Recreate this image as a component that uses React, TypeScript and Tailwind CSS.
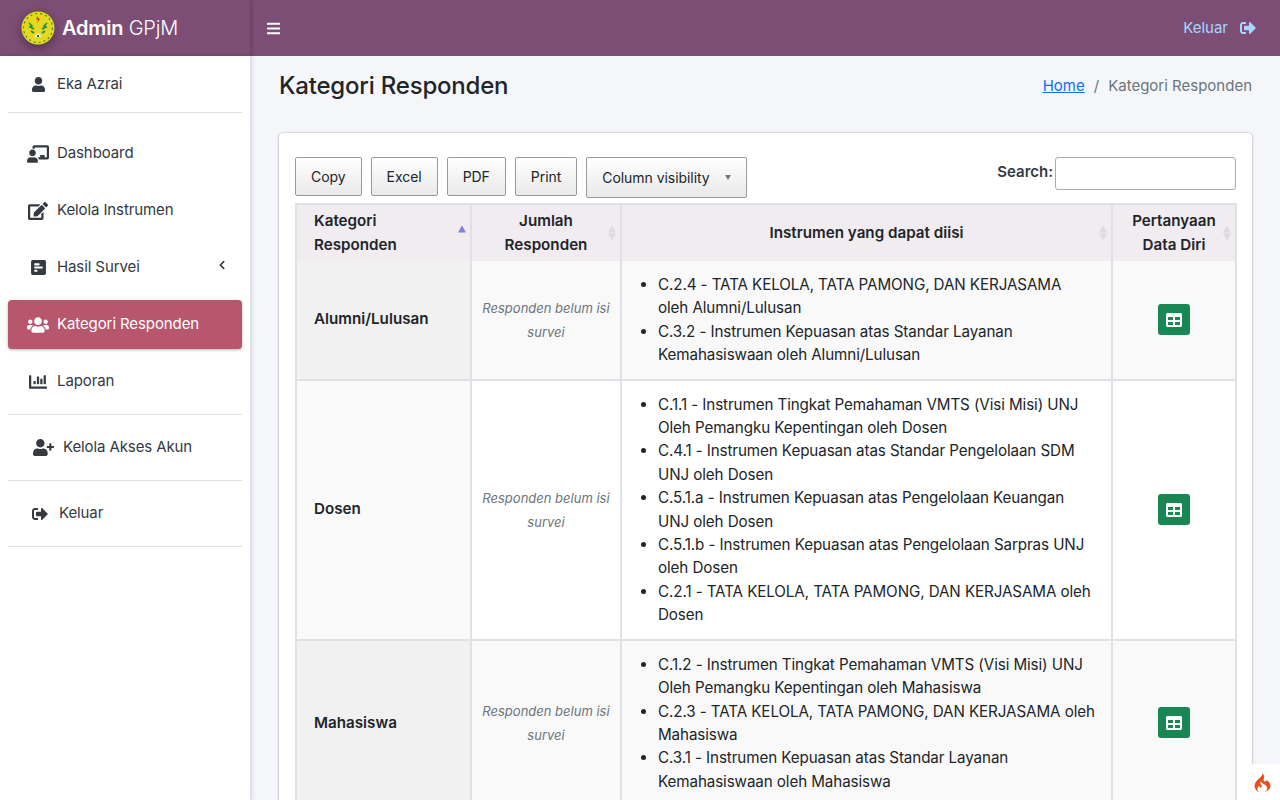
import {
  FaBars,
  FaChalkboardTeacher,
  FaChartBar,
  FaChevronLeft,
  FaEdit,
  FaPollH,
  FaSignOutAlt,
  FaTable,
  FaUser,
  FaUserPlus,
  FaUsers,
} from 'react-icons/fa';
import { SiCodeigniter } from 'react-icons/si';
import type { ReactNode } from 'react';

const font = "font-['Inter','Noto_Sans',sans-serif]";

function Logo() {
  return (
    <svg width="34" height="34" viewBox="0 0 34 34" className="shrink-0 rounded-full shadow-[0_3px_8px_rgba(0,0,0,0.35)]">
      <circle cx="17" cy="17" r="16.5" fill="#e3d81c" />
      <circle cx="17" cy="17" r="14.5" fill="none" stroke="#2f8f3f" strokeWidth="1.2" strokeDasharray="2 3" />
      <path d="M17 5l-2 3 2 1-1 3 3-4-2-1z" fill="#d2332b" />
      <path d="M8 12l3 3-2 1 4 2M26 12l-3 3 2 1-4 2M10 20l3 2M24 20l-3 2" fill="none" stroke="#1f8a4a" strokeWidth="1.6" />
      <path d="M13 26l4-4 4 4z" fill="#f3f3f3" />
      <path d="M16 24h2v2h-2z" fill="#1f6b3a" />
    </svg>
  );
}

function NavItem(props: { icon: ReactNode; label: string; active?: boolean; chevron?: boolean }) {
  const { icon, label, active, chevron } = props;
  return (
    <div
      className={
        active
          ? 'flex h-[49px] items-center rounded bg-[#b8566e] pl-[18px] text-white shadow-[0_1px_3px_rgba(0,0,0,0.3)]'
          : 'flex h-[49px] items-center rounded pl-[18px] text-[#343a40]'
      }
    >
      <span className="flex w-[24px] justify-center text-[#343a40]">{icon}</span>
      <span className="ml-[7px] text-[15px] tracking-[-0.1px]">{label}</span>
      {chevron ? <FaChevronLeft className="mb-[6px] ml-auto mr-[15px] text-[10px]" /> : null}
    </div>
  );
}

function Sidebar() {
  return (
    <aside className="flex w-[251px] shrink-0 flex-col border-r border-[#dee2e6] bg-white px-2 shadow-[1px_0_4px_rgba(0,0,0,0.12)]">
      <div className="flex h-[57px] items-center border-b border-[#dee2e6] pl-[23px] text-[#343a40]">
        <FaUser className="text-[15px]" />
        <span className="ml-[11px] text-[15px] tracking-[-0.1px]">Eka Azrai</span>
      </div>
      <nav className="mt-4 flex flex-col gap-2 border-b border-[#dee2e6] pb-2">
        <NavItem icon={<FaChalkboardTeacher className="text-[22px]" />} label="Dashboard" />
        <NavItem icon={<FaEdit className="text-[20px]" />} label="Kelola Instrumen" />
        <NavItem icon={<FaPollH className="text-[17px]" />} label="Hasil Survei" chevron />
        <NavItem
          icon={<FaUsers className="text-[22px] text-white" />}
          label="Kategori Responden"
          active
        />
        <NavItem icon={<FaChartBar className="text-[18px]" />} label="Laporan" />
      </nav>
      <div className="flex h-[66px] items-center border-b border-[#dee2e6] pl-[25px] text-[#343a40]">
        <FaUserPlus className="text-[21px]" />
        <span className="ml-[9px] text-[15px] tracking-[-0.1px]">Kelola Akses Akun</span>
      </div>
      <div className="flex h-[66px] items-center border-b border-[#dee2e6] pl-[24px] text-[#343a40]">
        <FaSignOutAlt className="text-[16px]" />
        <span className="ml-[11px] text-[15px] tracking-[-0.1px]">Keluar</span>
      </div>
    </aside>
  );
}

function ToolButton(props: { label: string; children?: ReactNode; tall?: boolean }) {
  return (
    <button
      className={
        (props.tall ? 'h-[41px] ' : 'h-[39px] ') +
        'flex items-center rounded-[2px] border border-[#999] bg-gradient-to-b from-white to-[#e9e9e9] px-[15px] text-[14px] tracking-[-0.05px] text-[#212529]'
      }
    >
      {props.label}
      {props.children}
    </button>
  );
}

function Sorter(props: { active?: boolean }) {
  return (
    <span className="absolute right-[4px] top-1/2 flex -translate-y-1/2 flex-col gap-[1px]">
      <span
        className={
          props.active
            ? 'h-0 w-0 border-x-[4px] border-b-[7px] border-x-transparent border-b-[#8080e0]'
            : 'h-0 w-0 border-x-[4px] border-b-[7px] border-x-transparent border-b-[#dcdcdc]'
        }
      />
      <span
        className={
          props.active
            ? 'h-0 w-0 border-x-[4px] border-t-[7px] border-x-transparent border-t-transparent'
            : 'h-0 w-0 border-x-[4px] border-t-[7px] border-x-transparent border-t-[#dcdcdc]'
        }
      />
    </span>
  );
}

const rows = [
  {
    name: 'Alumni/Lulusan',
    nameBg: 'bg-[#f1f1f1]',
    rowBg: 'bg-[#f9f9f9]',
    items: [
      'C.2.4 - TATA KELOLA, TATA PAMONG, DAN KERJASAMA oleh Alumni/Lulusan',
      'C.3.2 - Instrumen Kepuasan atas Standar Layanan Kemahasiswaan oleh Alumni/Lulusan',
    ],
  },
  {
    name: 'Dosen',
    nameBg: 'bg-[#fafafa]',
    rowBg: 'bg-white',
    items: [
      'C.1.1 - Instrumen Tingkat Pemahaman VMTS (Visi Misi) UNJ Oleh Pemangku Kepentingan oleh Dosen',
      'C.4.1 - Instrumen Kepuasan atas Standar Pengelolaan SDM UNJ oleh Dosen',
      'C.5.1.a - Instrumen Kepuasan atas Pengelolaan Keuangan UNJ oleh Dosen',
      'C.5.1.b - Instrumen Kepuasan atas Pengelolaan Sarpras UNJ oleh Dosen',
      'C.2.1 - TATA KELOLA, TATA PAMONG, DAN KERJASAMA oleh Dosen',
    ],
  },
  {
    name: 'Mahasiswa',
    nameBg: 'bg-[#f1f1f1]',
    rowBg: 'bg-[#f9f9f9]',
    items: [
      'C.1.2 - Instrumen Tingkat Pemahaman VMTS (Visi Misi) UNJ Oleh Pemangku Kepentingan oleh Mahasiswa',
      'C.2.3 - TATA KELOLA, TATA PAMONG, DAN KERJASAMA oleh Mahasiswa',
      'C.3.1 - Instrumen Kepuasan atas Standar Layanan Kemahasiswaan oleh Mahasiswa',
    ],
  },
];

function DataTable() {
  const th =
    'relative border-2 border-b-0 border-[#dee2e6] border-b-[#111] px-[17px] py-[4px] text-[15.2px] font-semibold leading-[24px] text-[#212529]';
  const td = 'border-2 border-t-0 border-[#dee2e6] align-middle';
  return (
    <table className="w-[940px] table-fixed border-collapse text-[#212529]">
      <thead>
        <tr className="bg-[#f0ecf0]">
          <th className={th + ' w-[175px] text-left'}>
            Kategori Responden
            <Sorter active />
          </th>
          <th className={th + ' w-[150px] text-center'}>
            Jumlah Responden
            <Sorter />
          </th>
          <th className={th + ' w-[491px] text-center'}>
            Instrumen yang dapat diisi
            <Sorter />
          </th>
          <th className={th + ' w-[124px] !px-[8px] text-center'}>
            Pertanyaan Data Diri
            <Sorter />
          </th>
        </tr>
      </thead>
      <tbody>
        {rows.map((row) => (
          <tr key={row.name} className={row.rowBg}>
            <td className={td + ' pl-[17px] text-[15.2px] font-semibold ' + row.nameBg}>{row.name}</td>
            <td className={td + ' px-[8px] text-center text-[13px] italic leading-[24px] text-[#6c757d]'}>
              Responden belum isi survei
            </td>
            <td className={td + ' py-[12px] pl-[36px] pr-[16px]'}>
              <ul className="list-disc text-[15.2px] leading-[23.4px] tracking-[-0.1px]">
                {row.items.map((item) => (
                  <li key={item}>{item}</li>
                ))}
              </ul>
            </td>
            <td className={td + ' text-center'}>
              <span className="inline-flex h-[31px] w-[32px] items-center justify-center rounded-[3px] bg-[#198754] align-middle text-white">
                <FaTable className="text-[16px]" />
              </span>
            </td>
          </tr>
        ))}
      </tbody>
    </table>
  );
}

export default function App() {
  return (
    <div className={font + ' relative flex h-[800px] w-[1280px] flex-col overflow-hidden bg-[#f4f6f9]'}>
      <header className="flex h-[56px] shrink-0 bg-[#7c4d75] text-white">
        <div className="flex w-[251px] shrink-0 items-center border-r border-[#6b4165] pl-[21px] shadow-[1px_0_3px_rgba(0,0,0,0.15)]">
          <Logo />
          <span className="ml-[7px] text-[20px] tracking-[-0.2px]">
            <b className="font-semibold">Admin</b> <span className="font-light">GPjM</span>
          </span>
        </div>
        <div className="flex flex-1 items-center justify-between pl-[15px] pr-[24px]">
          <FaBars className="text-[15px]" />
          <div className="flex items-center gap-[12px] text-[15px] text-[#a6d8ff]">
            <span>Keluar</span>
            <FaSignOutAlt className="text-[16px]" />
          </div>
        </div>
      </header>
      <div className="flex min-h-0 flex-1">
        <Sidebar />
        <main className="min-w-0 flex-1 px-[28px]">
          <div className="flex h-[60px] items-center justify-between">
            <h1 className="text-[24px] font-medium tracking-[-0.2px] text-[#212529]">Kategori Responden</h1>
            <div className="flex items-center text-[15px] text-[#6c757d]">
              <a className="text-[#0d6efd] underline">Home</a>
              <span className="mx-[9px]">/</span>
              <span>Kategori Responden</span>
            </div>
          </div>
          <section className="mt-[17px] w-[973px] rounded-[4px] bg-white px-[16px] pt-[24px] shadow-[0_0_2px_rgba(0,0,0,0.3),0_1px_3px_rgba(0,0,0,0.15)]">
            <div className="flex items-start justify-between">
              <div className="flex items-start gap-[9px]">
                <ToolButton label="Copy" />
                <ToolButton label="Excel" />
                <ToolButton label="PDF" />
                <ToolButton label="Print" />
                <ToolButton label="Column visibility" tall>
                  <span className="ml-[15px] mr-[0px] h-0 w-0 border-x-[3px] border-t-[5px] border-x-transparent border-t-[#777]" />
                </ToolButton>
              </div>
              <label className="flex items-center gap-[2px] text-[15px] font-semibold text-[#343a40]">
                <span className="mb-[2px]">Search:</span>
                <input className="h-[33px] w-[181px] rounded-[3px] border border-[#aaa] bg-white" />
              </label>
            </div>
            <div className="mt-[5px]">
              <DataTable />
            </div>
          </section>
        </main>
      </div>
      <div className="absolute bottom-0 right-0 flex h-[36px] w-[36px] items-center justify-center bg-white">
        <SiCodeigniter className="text-[19px] text-[#e8501f]" />
      </div>
    </div>
  );
}
